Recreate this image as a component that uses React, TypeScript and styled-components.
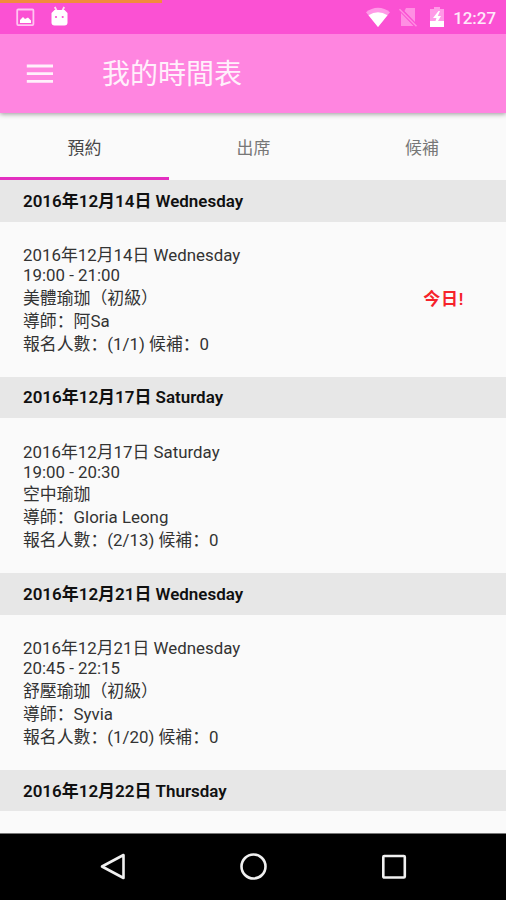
import React from "react";
import styled, { createGlobalStyle } from "styled-components";

const GlobalStyle = createGlobalStyle`
  * { box-sizing: border-box; }
  body {
    margin: 0;
    background: #fafafa;
    font-family: Roboto, "Noto Sans CJK SC", sans-serif;
    overflow: hidden;
  }
`;

const Screen = styled.div`
  width: 506px;
  height: 900px;
  display: flex;
  flex-direction: column;
  overflow: hidden;
  background: #fafafa;
`;

const StatusBar = styled.header`
  position: relative;
  z-index: 2;
  flex: none;
  height: 34px;
  display: flex;
  align-items: center;
  justify-content: space-between;
  padding: 0 10px 0 16px;
  background: #fb51d3;
  color: #fff;
`;

const LoadingBar = styled.div`
  position: absolute;
  top: 0;
  left: 0;
  width: 162px;
  height: 3px;
  background: #f38a3c;
`;

const StatusGroup = styled.div`
  display: flex;
  align-items: center;
`;

const Glyph = styled.svg<{ $gap?: number }>`
  display: block;
  flex: none;
  margin-right: ${({ $gap = 0 }) => $gap}px;
`;

const Clock = styled.span`
  font-size: 16.9px;
  font-weight: 500;
  line-height: 20px;
  padding-top: 2px;
  color: #ffe9fa;
`;

const AppBar = styled.div`
  position: relative;
  z-index: 1;
  flex: none;
  height: 79px;
  display: flex;
  align-items: center;
  padding-left: 26px;
  background: #ff85e0;
  box-shadow: 0 1px 5px rgba(0, 0, 0, 0.4);
`;

const Title = styled.h1`
  margin: 0 0 0 48px;
  padding-top: 3px;
  font-size: 28px;
  line-height: 40px;
  font-weight: 400;
  color: #fff0fb;
`;

const Tabs = styled.nav`
  flex: none;
  height: 67px;
  display: grid;
  grid-template-columns: 169px 169px 168px;
`;

const Tab = styled.div<{ $active?: boolean }>`
  display: flex;
  align-items: center;
  justify-content: center;
  padding-top: ${({ $active }) => ($active ? 5 : 2)}px;
  font-size: 16.9px;
  line-height: 24px;
  color: ${({ $active }) => ($active ? "#484848" : "#777")};
  border-bottom: ${({ $active }) => ($active ? "3px solid #e32fc0" : "0")};
`;

const Schedule = styled.main`
  flex: 1;
  min-height: 0;
  overflow: hidden;
`;

const DayHeader = styled.h2`
  margin: 0;
  height: 41.5px;
  padding: 1px 0 0 23px;
  display: flex;
  align-items: center;
  background: #e7e7e7;
  color: #101010;
  font-size: 16.97px;
  font-weight: 600;
  line-height: 23px;
`;

const Lesson = styled.article`
  height: 155.1px;
  padding: 22.5px 42px 0 23px;
  display: flex;
  justify-content: space-between;
`;

const Details = styled.div`
  display: flex;
  flex-direction: column;
`;

const Line = styled.div<{ $short?: boolean }>`
  height: ${({ $short }) => ($short ? 19.7 : 23)}px;
  line-height: ${({ $short }) => ($short ? 17 : 23)}px;
  font-size: 16.87px;
  color: #333;
  white-space: nowrap;
`;

const Today = styled.strong`
  align-self: flex-start;
  margin-top: 43px;
  font-size: 17px;
  line-height: 24px;
  font-weight: 600;
  letter-spacing: 0.7px;
  color: #f6222a;
`;

const NavBar = styled.footer`
  flex: none;
  height: 67px;
  display: flex;
  align-items: center;
  justify-content: center;
  gap: 112px;
  padding-left: 2px;
  background: #000;
  border-top: 1px solid #777;
`;

interface LessonData {
  time: string;
  course: string;
  teacher: string;
  enrolled: string;
  today?: boolean;
}

interface DayData {
  date: string;
  lesson?: LessonData;
}

const days: DayData[] = [
  {
    date: "2016年12月14日 Wednesday",
    lesson: { time: "19:00 - 21:00", course: "美體瑜珈（初級）", teacher: "阿Sa", enrolled: "(1/1)", today: true },
  },
  {
    date: "2016年12月17日 Saturday",
    lesson: { time: "19:00 - 20:30", course: "空中瑜珈", teacher: "Gloria Leong", enrolled: "(2/13)" },
  },
  {
    date: "2016年12月21日 Wednesday",
    lesson: { time: "20:45 - 22:15", course: "舒壓瑜珈（初級）", teacher: "Syvia", enrolled: "(1/20)" },
  },
  { date: "2016年12月22日 Thursday" },
];

function Day({ date, lesson }: DayData) {
  return (
    <section>
      <DayHeader>{date}</DayHeader>
      {lesson && (
        <Lesson>
          <Details>
            <Line>{date}</Line>
            <Line $short>{lesson.time}</Line>
            <Line>{lesson.course}</Line>
            <Line>導師：{lesson.teacher}</Line>
            <Line>報名人數：{lesson.enrolled} 候補：0</Line>
          </Details>
          {lesson.today && <Today>今日!</Today>}
        </Lesson>
      )}
    </section>
  );
}

export default function App() {
  return (
    <Screen>
      <GlobalStyle />
      <StatusBar>
        <LoadingBar />
        <StatusGroup>
          <Glyph width="19" height="20" viewBox="0 0 19 20" $gap={15}>
            <rect x="1.2" y="2.5" width="16.2" height="15.6" rx="1" fill="none" stroke="#ffc4f1" strokeWidth="1.8" />
            <path d="M4 16v-3l3-3 2 2 3-1.5 3 3V16z" fill="#fff" />
          </Glyph>
          <Glyph width="20" height="22" viewBox="0 0 20 22">
            <path d="M4.8 1l2 4M14.2 1l-2 4" stroke="#ffd8f5" strokeWidth="1.8" />
            <path d="M4.5 4h10l3 3v9.5a3 3 0 0 1-3 3h-10a3 3 0 0 1-3-3V7z" fill="#fff" />
            <circle cx="6" cy="11" r="1.1" fill="#fb51d3" />
            <circle cx="12.7" cy="11" r="1.1" fill="#fb51d3" />
          </Glyph>
        </StatusGroup>
        <StatusGroup>
          <Glyph width="26" height="22" viewBox="0 0 26 22" $gap={7}>
            <path d="M1 6.2C8 .2 18 .2 25 6.2L13 21z" fill="#ff99e7" />
            <path d="M3.5 9.3q9.5-6.3 19 0L13 21z" fill="#fff" />
          </Glyph>
          <Glyph width="20" height="22" viewBox="0 0 20 22" $gap={11}>
            <path d="M8 2h9v14L6.500 5zM3 7l12.500 13H3z" fill="#ff8fe3" />
            <path d="M1.5 3.200l17 17" stroke="#ff8fe3" strokeWidth="1.5" />
          </Glyph>
          <Glyph width="16" height="22" viewBox="0 0 16 22" $gap={8}>
            <path d="M5 1h6v2h4v12H1V3h4z" fill="#ff99e7" />
            <path d="M9.5 5L4 12h3.5l-1 3H1v6h14v-6H9l3-5H8.8L11 5z" fill="#fff" />
          </Glyph>
          <Clock>12:27</Clock>
        </StatusGroup>
      </StatusBar>
      <AppBar>
        <Glyph width="28" height="20" viewBox="0 0 28 20">
          <path d="M.8 2h26.2M.8 9.7h26.2M.8 17.3h26.2" stroke="#fff0fb" strokeWidth="2.8" />
        </Glyph>
        <Title>我的時間表</Title>
      </AppBar>
      <Tabs>
        <Tab $active>預約</Tab>
        <Tab>出席</Tab>
        <Tab>候補</Tab>
      </Tabs>
      <Schedule>
        {days.map((day) => (
          <Day key={day.date} {...day} />
        ))}
      </Schedule>
      <NavBar>
        <Glyph width="28" height="28" viewBox="0 0 28 28">
          <path d="M23.5 2v23L2 13.5z" fill="none" stroke="#f0f0f0" strokeWidth="2.6" strokeLinejoin="round" />
        </Glyph>
        <Glyph width="28" height="28" viewBox="0 0 28 28">
          <circle cx="13.5" cy="13.5" r="12" fill="none" stroke="#f0f0f0" strokeWidth="2.6" />
        </Glyph>
        <Glyph width="28" height="28" viewBox="0 0 28 28">
          <rect x="3.3" y="3" width="21.5" height="21.5" rx="1" fill="none" stroke="#f0f0f0" strokeWidth="2.6" />
        </Glyph>
      </NavBar>
    </Screen>
  );
}
